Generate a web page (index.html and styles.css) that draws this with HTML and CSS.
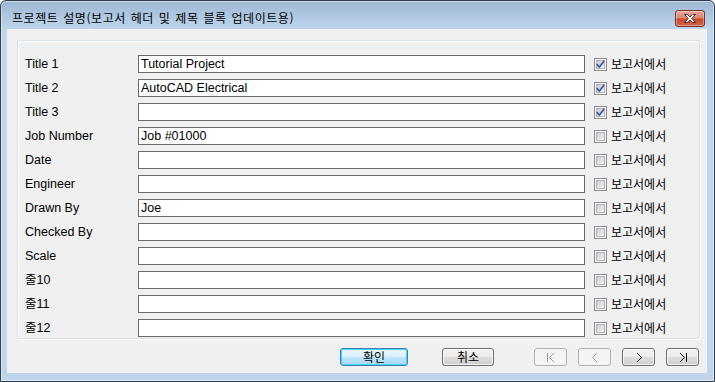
FILE: index.html
```html
<!DOCTYPE html>
<html lang="ko">
<head>
<meta charset="utf-8">
<title>프로젝트 설명</title>
<link rel="stylesheet" href="styles.css">
</head>
<body>
<div class="window">
  <div class="titlebar">
    <span class="title">프로젝트 설명(보고서 헤더 및 제목 블록 업데이트용)</span>
    <button class="close" type="button" aria-label="닫기">
      <svg width="14" height="9" viewBox="0 0 14 9"><path d="M1.5 0.5 H4.5 L7 3 L9.5 0.5 H12.5 L8.8 4.5 L12.5 8.5 H9.5 L7 6 L4.5 8.5 H1.5 L5.2 4.5 Z" fill="#fff" stroke="#5b2a22" stroke-width="1" stroke-linejoin="round"/></svg>
    </button>
  </div>
  <div class="client">
    <div class="group">
      <div class="row"><span class="label">Title 1</span><span class="field">Tutorial Project</span><span class="check on"><svg width="13" height="13" viewBox="0 0 13 13"><use href="#cbox"/><path class="tick" d="M3.2 6.6 L5.3 9.2 L9.8 3.2"/></svg></span><span class="ctext">보고서에서</span></div>
      <div class="row"><span class="label">Title 2</span><span class="field">AutoCAD Electrical</span><span class="check on"><svg width="13" height="13" viewBox="0 0 13 13"><use href="#cbox"/><path class="tick" d="M3.2 6.6 L5.3 9.2 L9.8 3.2"/></svg></span><span class="ctext">보고서에서</span></div>
      <div class="row"><span class="label">Title 3</span><span class="field"></span><span class="check on"><svg width="13" height="13" viewBox="0 0 13 13"><use href="#cbox"/><path class="tick" d="M3.2 6.6 L5.3 9.2 L9.8 3.2"/></svg></span><span class="ctext">보고서에서</span></div>
      <div class="row"><span class="label">Job Number</span><span class="field">Job #01000</span><span class="check"><svg width="13" height="13" viewBox="0 0 13 13"><use href="#cbox"/></svg></span><span class="ctext">보고서에서</span></div>
      <div class="row"><span class="label">Date</span><span class="field"></span><span class="check"><svg width="13" height="13" viewBox="0 0 13 13"><use href="#cbox"/></svg></span><span class="ctext">보고서에서</span></div>
      <div class="row"><span class="label">Engineer</span><span class="field"></span><span class="check"><svg width="13" height="13" viewBox="0 0 13 13"><use href="#cbox"/></svg></span><span class="ctext">보고서에서</span></div>
      <div class="row"><span class="label">Drawn By</span><span class="field">Joe</span><span class="check"><svg width="13" height="13" viewBox="0 0 13 13"><use href="#cbox"/></svg></span><span class="ctext">보고서에서</span></div>
      <div class="row"><span class="label">Checked By</span><span class="field"></span><span class="check"><svg width="13" height="13" viewBox="0 0 13 13"><use href="#cbox"/></svg></span><span class="ctext">보고서에서</span></div>
      <div class="row"><span class="label">Scale</span><span class="field"></span><span class="check"><svg width="13" height="13" viewBox="0 0 13 13"><use href="#cbox"/></svg></span><span class="ctext">보고서에서</span></div>
      <div class="row"><span class="label">줄10</span><span class="field"></span><span class="check"><svg width="13" height="13" viewBox="0 0 13 13"><use href="#cbox"/></svg></span><span class="ctext">보고서에서</span></div>
      <div class="row"><span class="label">줄11</span><span class="field"></span><span class="check"><svg width="13" height="13" viewBox="0 0 13 13"><use href="#cbox"/></svg></span><span class="ctext">보고서에서</span></div>
      <div class="row"><span class="label">줄12</span><span class="field"></span><span class="check"><svg width="13" height="13" viewBox="0 0 13 13"><use href="#cbox"/></svg></span><span class="ctext">보고서에서</span></div>
    </div>
    <div class="buttons">
      <button class="btn default ok" type="button">확인</button>
      <button class="btn cancel" type="button">취소</button>
      <button class="btn nav first" type="button" disabled aria-label="처음"><svg width="10" height="11" viewBox="0 0 10 11"><path d="M1.5 1 V10 M8 1 L3.5 5.5 L8 10" fill="none" stroke="currentColor" stroke-width="1"/></svg></button>
      <button class="btn nav" type="button" disabled aria-label="이전"><svg width="6" height="11" viewBox="0 0 6 11"><path d="M5 1 L0.5 5.5 L5 10" fill="none" stroke="currentColor" stroke-width="1"/></svg></button>
      <button class="btn nav" type="button" aria-label="다음"><svg width="6" height="11" viewBox="0 0 6 11"><path d="M1 1 L5.5 5.5 L1 10" fill="none" stroke="currentColor" stroke-width="1"/></svg></button>
      <button class="btn nav" type="button" aria-label="마지막"><svg width="10" height="11" viewBox="0 0 10 11"><path d="M2 1 L6.5 5.5 L2 10 M8.5 1 V10" fill="none" stroke="currentColor" stroke-width="1"/></svg></button>
    </div>
  </div>
</div>
<svg width="0" height="0" class="defs">
  <defs>
    <linearGradient id="cbg" x1="0" y1="0" x2="1" y2="1">
      <stop offset="0" stop-color="#c3c7ce"/>
      <stop offset="1" stop-color="#f7f7f7"/>
    </linearGradient>
    <g id="cbox">
      <rect x="0.5" y="0.5" width="12" height="12" fill="#f4f4f4" stroke="#8f8f8f"/>
      <rect x="2.5" y="2.5" width="8" height="8" fill="url(#cbg)" stroke="#b3b7bd" stroke-width="1"/>
    </g>
  </defs>
</svg>
</body>
</html>
```
FILE: styles.css
```css
html, body {
  margin: 0;
  padding: 0;
  background: #ffffff;
}

body {
  font-family: "Liberation Sans", "Noto Sans CJK KR", sans-serif;
  font-size: 12px;
  color: #000;
}

.defs {
  position: absolute;
  width: 0;
  height: 0;
}

.window {
  width: 715px;
  height: 382px;
  box-sizing: border-box;
  border: 1px solid #2f3d4c;
  border-radius: 6px 6px 0 0;
  background: linear-gradient(to bottom, #9cb6d3 0px, #b0c8e2 16px, #bfd5ec 28px, #bfd5ec 100%);
  box-shadow: inset 0 0 0 1px rgba(255, 255, 255, 0.45);
  display: flex;
  flex-direction: column;
  overflow: hidden;
}

.titlebar {
  height: 28px;
  box-sizing: border-box;
  padding: 8px 9px 2px 11px;
  display: flex;
  align-items: center;
  justify-content: space-between;
}

.title {
  font-family: "Noto Sans CJK KR", sans-serif;
  font-size: 12px;
  line-height: 14px;
  color: #000;
  letter-spacing: 0.55px;
  word-spacing: 1px;
}

.close {
  width: 30px;
  height: 17px;
  padding: 0;
  margin: 1px 0 0 0;
  border: 1px solid #7a3326;
  border-radius: 3px;
  background: linear-gradient(to bottom, #e9a99c 0%, #d98873 45%, #c5492e 55%, #d3664a 100%);
  box-shadow: inset 0 0 0 1px rgba(255, 255, 255, 0.35);
  display: flex;
  align-items: center;
  justify-content: center;
}

.client {
  margin-left: 6px;
  width: 700px;
  height: 344px;
  box-sizing: border-box;
  background: #f0f0f0;
  display: flex;
  flex-direction: column;
}

.group {
  margin: 11px 7px 0 10px;
  height: 299px;
  box-sizing: border-box;
  border: 1px solid #d5dfe5;
  border-radius: 3px;
  box-shadow: inset 1px 1px 0 #ffffff, 1px 1px 0 #ffffff;
  padding: 14px 0 0 7px;
}

.row {
  display: flex;
  align-items: center;
  height: 18px;
  margin-bottom: 6px;
}

.label {
  width: 113px;
  flex: none;
  font-size: 12.5px;
  line-height: 14px;
  white-space: nowrap;
}

.field {
  width: 447px;
  height: 18px;
  box-sizing: border-box;
  border: 1px solid #6b6b6b;
  background: #ffffff;
  padding: 0 2px;
  font-size: 12.5px;
  line-height: 16px;
  white-space: nowrap;
  overflow: hidden;
}

.check {
  margin-left: 9px;
  width: 13px;
  height: 13px;
  flex: none;
  display: block;
}

.check svg {
  display: block;
}

.tick {
  fill: none;
  stroke: #3b5aa3;
  stroke-width: 1.7;
  stroke-linecap: round;
  stroke-linejoin: round;
}

.ctext {
  margin-left: 4px;
  font-family: "Noto Sans CJK KR", sans-serif;
  line-height: 14px;
}

.buttons {
  display: flex;
  align-items: flex-start;
  margin-top: 9px;
  padding-left: 333px;
}

.btn {
  height: 18px;
  box-sizing: border-box;
  padding: 0;
  border: 1px solid #707070;
  border-radius: 3px;
  background: linear-gradient(to bottom, #f2f2f2 0%, #ebebeb 50%, #dddddd 51%, #cfcfcf 100%);
  box-shadow: inset 0 0 0 1px rgba(255, 255, 255, 0.7);
  font-family: "Noto Sans CJK KR", sans-serif;
  font-size: 12px;
  line-height: 14px;
  color: #000;
  display: flex;
  align-items: center;
  justify-content: center;
}

.btn.default {
  border-color: #3c7fb1;
  background: linear-gradient(to bottom, #eaf6fd 0%, #d9f0fc 50%, #bee6fd 51%, #a7d9f5 100%);
  box-shadow: inset 0 0 0 1px #48d4f7;
}

.ok {
  width: 68px;
}

.cancel {
  width: 52px;
  margin-left: 34px;
}

.nav {
  width: 33px;
  margin-left: 11px;
}

.nav.first {
  margin-left: 40px;
}

.nav svg {
  display: block;
}

.btn:disabled {
  border-color: #adb2b5;
  background: #f4f4f4;
  box-shadow: none;
  color: #9a9a9a;
}
```
